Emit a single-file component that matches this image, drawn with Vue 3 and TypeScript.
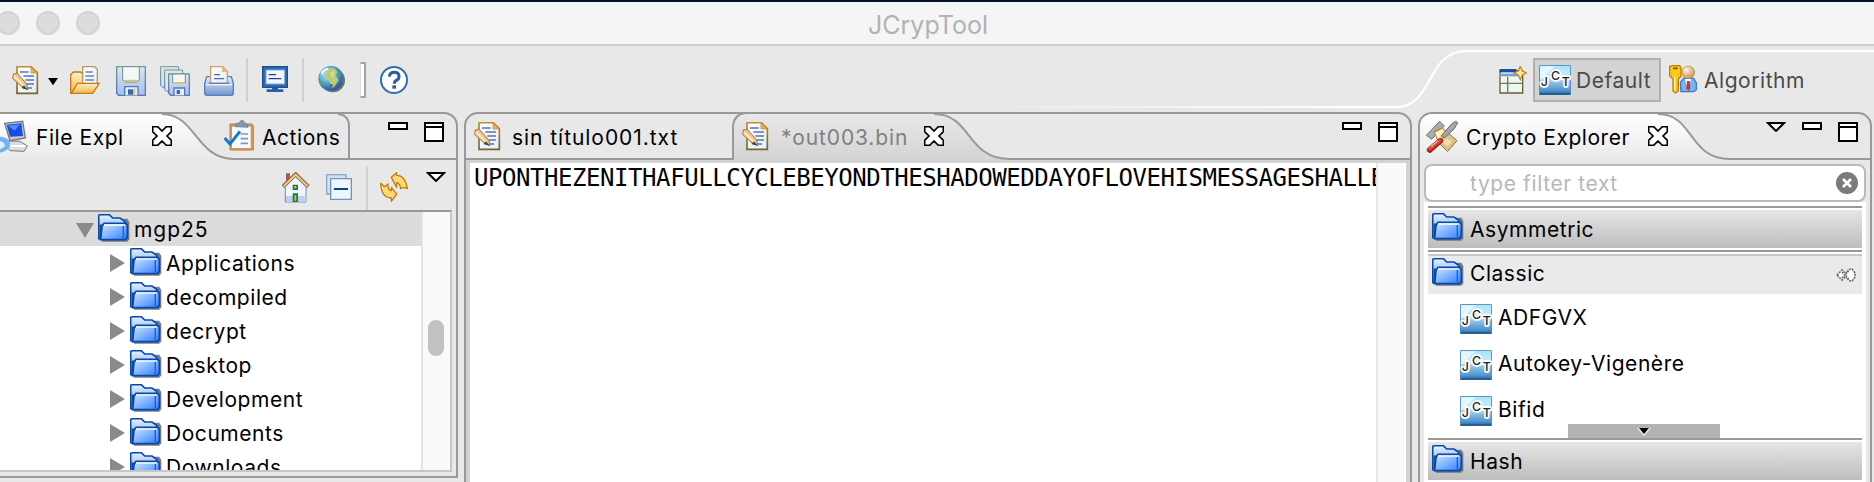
<script setup lang="ts">
import { h, ref } from 'vue'

interface ToolItem { icon: string; label: string; width: number; gap: number }

const tools: ToolItem[] = [
  { icon: 'doc', label: 'New', width: 30, gap: 12 },
  { icon: 'caret', label: 'New menu', width: 10, gap: 6 },
  { icon: 'open', label: 'Open', width: 30, gap: 12 },
  { icon: 'save', label: 'Save', width: 30, gap: 16 },
  { icon: 'saveall', label: 'Save all', width: 30, gap: 14 },
  { icon: 'print', label: 'Print', width: 30, gap: 14 },
  { icon: 'rule', label: '', width: 2, gap: 12 },
  { icon: 'monitor', label: 'Console', width: 30, gap: 14 },
  { icon: 'rule', label: '', width: 2, gap: 10 },
  { icon: 'globe', label: 'Web', width: 30, gap: 14 },
  { icon: 'grip', label: '', width: 6, gap: 12 },
  { icon: 'help', label: 'Help', width: 30, gap: 14 },
]

const letters = [
  { c: 'J', x: 5, y: 64 },
  { c: 'C', x: 36, y: 46 },
  { c: 'T', x: 68, y: 64 },
]

const JctIcon = () =>
  h('svg', { width: 32, height: 30, viewBox: '0 0 96 90' }, [
    h('use', { href: '#i-tile', width: 96, height: 90 }),
    h(
      'g',
      {
        'font-family': 'Inter, sans-serif', 'font-size': 37, 'font-weight': 500, fill: '#222',
        stroke: '#fff', 'stroke-width': 11, 'stroke-linejoin': 'round', 'paint-order': 'stroke',
      },
      letters.map((l) => h('text', { x: l.x, y: l.y }, l.c)),
    ),
  ])

const folders = ['Applications', 'decompiled', 'decrypt', 'Desktop', 'Development', 'Documents', 'Downloads']
const classic = ['ADFGVX', 'Autokey-Vigenère', 'Bifid']
const content = ref('UPONTHEZENITHAFULLCYCLEBEYONDTHESHADOWEDDAYOFLOVEHISMESSAGESHALLE')
const filter = ref('')
</script>

<template>
  <div class="window">
    <svg class="defs" width="0" height="0" aria-hidden="true">
      <defs>
        <linearGradient id="gBlue" x1="0" y1="0" x2="1" y2="1"><stop offset="0" stop-color="#d6eaff" /><stop offset="1" stop-color="#2a7cff" /></linearGradient>
        <linearGradient id="gBack" x1="0" y1="0" x2="0" y2="1"><stop offset="0" stop-color="#e8f2ff" /><stop offset="1" stop-color="#4a90f0" /></linearGradient>
        <linearGradient id="gDoc" x1="0" y1="0" x2="1" y2="1"><stop offset="0" stop-color="#fff" /><stop offset="1" stop-color="#e3edf9" /></linearGradient>
        <linearGradient id="gDocEdge" x1="0" y1="0" x2="0" y2="1"><stop offset="0" stop-color="#c08f2c" /><stop offset="1" stop-color="#75642c" /></linearGradient>
        <linearGradient id="gGold" x1="0" y1="0" x2="0" y2="1"><stop offset="0" stop-color="#fff0c4" /><stop offset="1" stop-color="#f2b64a" /></linearGradient>
        <linearGradient id="gDisk" x1="0" y1="0" x2="0" y2="1"><stop offset="0" stop-color="#d9e8ee" /><stop offset="1" stop-color="#a3bfec" /></linearGradient>
        <linearGradient id="gDiskEdge" x1="0" y1="0" x2="0" y2="1"><stop offset="0" stop-color="#789596" /><stop offset="1" stop-color="#5577b5" /></linearGradient>
        <linearGradient id="gTray" x1="0" y1="0" x2="0" y2="1"><stop offset="0" stop-color="#e5edf8" /><stop offset="1" stop-color="#6f96cf" /></linearGradient>
        <radialGradient id="gGlobe" cx=".35" cy=".3" r=".75"><stop offset="0" stop-color="#c9f2f5" /><stop offset=".5" stop-color="#50a9d6" /><stop offset="1" stop-color="#274b8b" /></radialGradient>
        <linearGradient id="gJct" x1="0" y1="0" x2="0" y2="1"><stop offset="0" stop-color="#a8e4f8" /><stop offset=".42" stop-color="#c9edfb" /><stop offset=".6" stop-color="#8abce4" /><stop offset=".86" stop-color="#4f94d0" /><stop offset="1" stop-color="#29609b" /></linearGradient>
        <radialGradient id="gHead" cx=".35" cy=".3" r=".8"><stop offset="0" stop-color="#fff3d8" /><stop offset="1" stop-color="#c08a4c" /></radialGradient>
        <linearGradient id="gWhiteTab" x1="0" y1="0" x2="0" y2="1"><stop offset="0" stop-color="#fff" /><stop offset="1" stop-color="#e8e8e8" /></linearGradient>
        <linearGradient id="gGreyTab" x1="0" y1="0" x2="0" y2="1"><stop offset="0" stop-color="#e8e8e8" /><stop offset="1" stop-color="#d3d3d3" /></linearGradient>
      </defs>
      <symbol id="i-doc" viewBox="0 0 90 90">
        <path d="M15 2H58L76 20V82H15Z" fill="url(#gDoc)" stroke="url(#gDocEdge)" stroke-width="5" />
        <path d="M57 3V21H75Z" fill="#e5b45c" stroke="#c18d35" stroke-width="2" />
        <path d="M24 18H50M34 30H66M40 42H66M44 54H66M42 66H60" stroke="#5674b7" stroke-width="4" />
        <path d="M4 24L16 22L44 54L48 70L34 66L2 38Z" fill="#e7c797" stroke="#aa7635" stroke-width="3" />
        <path d="M6 30L38 62" stroke="#fff0cc" stroke-width="5" /><path d="M36 58L48 72L28 66Z" fill="#354d62" />
      </symbol>
      <symbol id="i-caret" viewBox="0 0 30 90"><path d="M0 36H30L15 58Z" fill="#000" /></symbol>
      <symbol id="i-open" viewBox="0 0 90 90">
        <path d="M2 82V26L10 18H32L38 24H60V60L18 82Z" fill="url(#gGold)" stroke="#bd7c1c" stroke-width="4" />
        <path d="M38 2H74L82 10V54H38Z" fill="url(#gDoc)" stroke="#b59a55" stroke-width="4" />
        <path d="M46 18H68M46 30H72M46 42H72" stroke="#6685bd" stroke-width="5" />
        <path d="M22 52H88L68 82H4Z" fill="url(#gGold)" stroke="#c07d1d" stroke-width="4" />
      </symbol>
      <symbol id="i-save" viewBox="0 0 90 90">
        <path d="M2 2H88V88H8L2 82Z" fill="url(#gDisk)" stroke="url(#gDiskEdge)" stroke-width="4" />
        <path d="M20 2H70V42L64 48H26L20 42Z" fill="#f3f7f6" stroke="#70908e" stroke-width="3" /><path d="M24 44H66" stroke="#d9c069" stroke-width="5" />
        <path d="M26 88V62H66V88" fill="#e7eefa" stroke="#5577b5" stroke-width="4" /><path d="M36 70H52V86H36Z" fill="#3968a9" /><path d="M56 64V86" stroke="#e0c88d" stroke-width="4" />
      </symbol>
      <symbol id="i-saveall" viewBox="0 0 90 90">
        <path d="M2 2H56V64H8L2 58Z" fill="#d9e4e7" stroke="url(#gDiskEdge)" stroke-width="3" />
        <path d="M14 12H68V76H20L14 70Z" fill="#dce8ec" stroke="url(#gDiskEdge)" stroke-width="3" />
        <path d="M26 24H88V88H32L26 82Z" fill="url(#gDisk)" stroke="url(#gDiskEdge)" stroke-width="4" />
        <path d="M38 24H76V50H38Z" fill="#f5f7f2" stroke="#70908e" stroke-width="3" /><path d="M40 50H74" stroke="#d9c069" stroke-width="4" />
        <path d="M42 88V66H74V88" fill="#e7eefa" stroke="#5577b5" stroke-width="4" /><path d="M50 72H60V84H50Z" fill="#3968a9" />
      </symbol>
      <symbol id="i-print" viewBox="0 0 90 90">
        <path d="M8 32H82L88 52V84L84 88H6L2 84V52Z" fill="url(#gTray)" stroke="#5b7cb9" stroke-width="4" />
        <path d="M20 2H56L70 16V52H20Z" fill="url(#gDoc)" stroke="#c3a568" stroke-width="4" /><path d="M54 3V18H69Z" fill="#e6bb67" />
        <path d="M30 26H48M30 38H60" stroke="#576b9b" stroke-width="4" /><path d="M6 56H84" stroke="#eef5ff" stroke-width="4" /><path d="M14 52H76" stroke="#637fac" stroke-width="4" />
      </symbol>
      <symbol id="i-monitor" viewBox="0 0 90 90">
        <path d="M2 2H76V64H2Z" fill="#2d6bb4" stroke="#1c4e94" stroke-width="4" /><path d="M12 12H68V54H12Z" fill="#f1f6ff" stroke="#80a9da" stroke-width="3" />
        <path d="M20 26H42M20 38H58" stroke="#283d8d" stroke-width="4" /><path d="M30 64H48V70H64V78H14V70H30Z" fill="#2361a7" />
      </symbol>
      <symbol id="i-globe" viewBox="0 0 90 90">
        <circle cx="45" cy="43" r="36" fill="#77705a" /><circle cx="39" cy="38" r="37" fill="url(#gGlobe)" stroke="#4188ae" stroke-width="2" />
        <path d="M30 8L48 6L58 18L52 28L62 42L52 58L44 66L32 44L22 38L20 22Z" fill="#b9cd78" /><path d="M36 20L48 14L50 28L42 36Z" fill="#e7d29b" />
        <path d="M58 14L70 26L64 34ZM8 44L18 54L16 62L6 52Z" fill="#659b62" /><circle cx="40" cy="58" r="4" fill="#c3342b" /><path d="M10 24Q16 10 30 8" stroke="#e6fcff" stroke-width="6" fill="none" />
      </symbol>
      <symbol id="i-help" viewBox="0 0 90 90">
        <circle cx="42" cy="42" r="39" fill="#fff" stroke="#346fa9" stroke-width="6" /><path d="M28 32Q29 19 43 19T57 32Q57 39 49 43Q43 46 43 53" fill="none" stroke="#285f9e" stroke-width="9" /><path d="M37 58H48V68H37Z" fill="#285f9e" />
      </symbol>
      <symbol id="i-folder" viewBox="0 0 96 84">
        <path d="M8 14H88L94 24V76L88 83H12Z" fill="#666" opacity=".85" />
        <path d="M2 74V4L8 2H34L44 12H66L80 22V34H8V76Z" fill="url(#gBack)" stroke="#0748a8" stroke-width="5" />
        <path d="M12 38L18 28H84L88 34V70L82 77H8Z" fill="url(#gBlue)" stroke="#0748a8" stroke-width="5" /><path d="M18 33H80" stroke="#fff" stroke-width="4" /><path d="M76 36V72" stroke="#2b55d8" stroke-width="4" />
      </symbol>
      <symbol id="i-tile" viewBox="0 0 96 90">
        <rect x="1" y="1" width="94" height="88" rx="3" fill="url(#gJct)" stroke="#4d86b8" stroke-width="3" /><path d="M4 4H48L4 44Z" fill="#fff" opacity=".65" /><path d="M2 87H94" stroke="#235889" stroke-width="5" />
      </symbol>
      <symbol id="i-close" viewBox="0 0 60 60"><path d="M2 2H17L30 15L43 2H58V17L45 30L58 43V58H43L30 45L17 58H2V43L15 30L2 17Z" fill="#fff" stroke="#000" stroke-width="5" /></symbol>
      <symbol id="i-min" viewBox="0 0 20 8"><path d="M1 1H19V7H1Z" fill="#fff" stroke="#000" stroke-width="2" /></symbol>
      <symbol id="i-max" viewBox="0 0 20 20"><path d="M1 1H19V19H1ZM1 5H19" fill="#fff" stroke="#000" stroke-width="2" /></symbol>
      <symbol id="i-menu" viewBox="0 0 20 10"><path d="M2 1H18L10 9Z" fill="#fff" stroke="#000" stroke-width="2" /></symbol>
    </svg>

    <div class="desktop"></div>
    <header class="titlebar">
      <div class="lights"><i></i><i></i><i></i></div>
      <span class="title">JCrypTool</span>
    </header>

    <nav class="toolbar">
      <svg class="swoosh" width="914" height="66" aria-hidden="true">
        <linearGradient id="gFade" gradientUnits="userSpaceOnUse" x1="0" y1="0" x2="400" y2="0"><stop offset="0" stop-color="#fff" stop-opacity="0" /><stop offset="1" stop-color="#fff" /></linearGradient>
        <path d="M0 60H400V62H0Z" fill="url(#gFade)" /><path d="M400 61H478" stroke="none" fill="none" /><path d="M400 61H436C474 61 466 5 506 5H914" fill="none" stroke="#fff" stroke-width="2" />
      </svg>
      <template v-for="(t, n) in tools" :key="n">
        <span v-if="t.icon === 'rule' || t.icon === 'grip'" :class="t.icon" :style="{ marginLeft: t.gap + 'px' }"></span>
        <svg v-else height="30" :width="t.width" :style="{ marginLeft: t.gap + 'px' }" :aria-label="t.label"><use :href="'#i-' + t.icon" /></svg>
      </template>
      <div class="perspectives">
        <svg width="28" height="30" viewBox="0 0 84 90">
          <path d="M3 14H71V81H3Z" fill="#edf8ed" stroke="#6b5e3c" stroke-width="4" /><path d="M2 14H52" stroke="#164f9b" stroke-width="10" /><path d="M3 27H71" stroke="#75a0cf" stroke-width="8" /><path d="M26 32V81M3 52H71M26 52H71" stroke="#7a755d" stroke-width="4" /><path d="M64 1L70 15L83 21L70 27L64 41L58 27L45 21L58 15Z" fill="#ffe9a8" stroke="#bd8a19" stroke-width="4" />
        </svg>
        <button class="persp active"><JctIcon /><span>Default</span></button>
        <button class="persp">
          <svg width="28" height="30" viewBox="0 0 84 90">
            <path d="M34 52L44 40H74L82 54V74L74 80H36Z" fill="#75b4f2" stroke="#3479d0" stroke-width="4" /><path d="M48 42L57 78L66 42Z" fill="#fff" /><path d="M54 48H62L64 70L58 78L52 70Z" fill="#d32c2c" />
            <circle cx="58" cy="22" r="19" fill="url(#gHead)" stroke="#b9874b" stroke-width="2" /><path d="M2 4L10 2H32L36 8V34L28 42V78L20 84L12 78V42L2 32Z" fill="#ffc71e" stroke="#b97e08" stroke-width="4" /><path d="M12 10H26" stroke="#7d5810" stroke-width="5" /><path d="M17 36V76" stroke="#fff3a0" stroke-width="4" />
          </svg><span>Algorithm</span>
        </button>
      </div>
    </nav>

    <main class="workbench">
      <section class="panel files">
        <svg class="tabs" width="458" height="50" aria-hidden="true">
          <path d="M0 2H162C196 2 196 47 234 47V50H0Z" fill="url(#gWhiteTab)" /><path d="M162 2C196 2 196 47 234 47H457M338 2Q349 3 349 14V47" fill="none" stroke="#999" stroke-width="2" />
        </svg>
        <div class="head">
          <svg width="28" height="34" viewBox="0 0 84 102"><path d="M14 10L68 4L76 54L30 62Z" fill="#c9c9cc" stroke="#77777c" stroke-width="4" /><path d="M20 14L64 10L69 48L30 50Z" fill="#164fe0" /><path d="M24 17L60 13L44 32Z" fill="#4b8eff" /><path d="M0 62L60 64L82 78L72 94L30 92Z" fill="#ddd" stroke="#777" stroke-width="3" /><path d="M32 78L76 78" stroke="#fff" stroke-width="6" /><path d="M0 50Q24 50 30 70Q32 92 0 98Z" fill="#6fb4ee" /><path d="M0 64Q16 66 14 80L0 88Z" fill="#dff1ff" /></svg>
          <span class="lbl file">File Expl</span>
          <svg class="close" width="20" height="20"><use href="#i-close" /></svg>
          <svg class="clip" width="30" height="32" viewBox="0 0 90 96">
            <path d="M18 12H84L88 18V90H18Z" fill="#d19b58" stroke="#bb823f" stroke-width="3" /><path d="M24 20H80V84H24Z" fill="#f6faff" /><path d="M34 20V12L46 8Q54 -6 62 8L72 14V22Z" fill="#8796ad" stroke="#65758c" stroke-width="2" /><path d="M50 42H72M50 56H72M50 70H72" stroke="#7d95bf" stroke-width="5" /><path d="M2 54L18 72L48 34" fill="none" stroke="#1277d9" stroke-width="9" />
          </svg>
          <span class="lbl">Actions</span>
          <div class="ctl"><svg width="20" height="8"><use href="#i-min" /></svg><svg width="20" height="20"><use href="#i-max" /></svg></div>
        </div>
        <div class="viewbar">
          <svg width="28" height="32" viewBox="0 0 84 96"><path d="M12 4H24V30H12Z" fill="#a06048" /><path d="M10 44L40 14L72 44V90H10Z" fill="#edf5ff" stroke="#728bb2" stroke-width="3" /><path d="M12 72H72V90H12Z" fill="#bad0ee" /><path d="M3 44L41 7L79 44" fill="none" stroke="#8f673b" stroke-width="12" /><path d="M5 43L41 8L77 43" fill="none" stroke="#e9c894" stroke-width="6" /><path d="M32 38H48V54H32ZM32 64H48V90H32Z" fill="#2d7046" /><path d="M36 42H43V49H36ZM37 70H43V86H37Z" fill="#9bd348" /></svg>
          <svg width="26" height="26" viewBox="0 0 78 78"><path d="M2 2H60V60H2Z" fill="#cfe2f4" stroke="#8ba7c9" stroke-width="4" /><path d="M14 14H76V76H14Z" fill="#eaf7ff" stroke="#7b91b7" stroke-width="4" /><path d="M24 45H66" stroke="#11407f" stroke-width="6" /></svg>
          <span class="rule"></span>
          <svg width="28" height="30" viewBox="0 0 84 90"><g fill="#ffd979" stroke="#bd7e0d" stroke-width="4" stroke-linejoin="round"><path d="M34 16L50 2V10Q76 10 82 50Q72 44 62 50Q60 34 50 32V46Z" /><path d="M2 34L14 44L24 36Q22 54 34 56V46L50 66L34 88V78Q4 78 2 34Z" /></g></svg>
          <svg class="vmenu" width="20" height="10"><use href="#i-menu" /></svg>
        </div>
        <div class="treebox">
          <ul class="tree">
            <li class="root"><svg class="tri" width="18" height="16"><path d="M0 1H18L9 16Z" fill="#8a8a8a" /></svg><svg class="fold" width="32" height="28"><use href="#i-folder" /></svg><span>mgp25</span></li>
            <li v-for="f in folders" :key="f"><svg class="tri" width="15" height="18"><path d="M0 0L15 9L0 18Z" fill="#8a8a8a" /></svg><svg class="fold" width="32" height="28"><use href="#i-folder" /></svg><span>{{ f }}</span></li>
          </ul>
          <div class="track"><div class="thumb"></div></div>
        </div>
      </section>

      <section class="panel editor">
        <svg class="tabs" width="948" height="50" aria-hidden="true">
          <path d="M270 50V14Q271 2 284 2H470C508 2 502 47 546 47V50Z" fill="url(#gGreyTab)" /><path d="M1 47H269V14Q270 2 282 1M470 2C508 2 502 47 546 47H947" fill="none" stroke="#999" stroke-width="2" />
        </svg>
        <div class="head">
          <svg class="d1" width="30" height="30"><use href="#i-doc" /></svg><span class="lbl t1">sin título001.txt</span>
          <svg class="d2" width="30" height="30"><use href="#i-doc" /></svg><span class="lbl t2">*out003.bin</span>
          <svg class="close" width="20" height="20"><use href="#i-close" /></svg>
          <div class="ctl"><svg width="20" height="8"><use href="#i-min" /></svg><svg width="20" height="20"><use href="#i-max" /></svg></div>
        </div>
        <div class="textbox"><pre>{{ content }}</pre><div class="etrack"></div></div>
      </section>

      <section class="panel crypto">
        <svg class="tabs" width="454" height="50" aria-hidden="true">
          <path d="M2 50V14Q2 2 14 2H240C276 2 270 47 312 47V50Z" fill="url(#gWhiteTab)" /><path d="M240 2C276 2 270 47 312 47H453" fill="none" stroke="#999" stroke-width="2" />
        </svg>
        <div class="head">
          <svg width="34" height="34" viewBox="0 0 102 102"><path d="M4 46L44 4L58 18L20 58Z" fill="#aaa" stroke="#777" stroke-width="3" /><path d="M28 36L52 24L96 62L68 94L42 70Z" fill="#dfc08a" stroke="#927047" stroke-width="3" /><path d="M30 38L52 26L66 44L40 60Z" fill="#fff3a8" /><path d="M60 54L80 62L68 80L54 66Z" fill="#f7dda6" /><path d="M94 4L82 10L48 48L58 54L88 26L98 8Z" fill="#a6a6ae" stroke="#66666e" stroke-width="3" /><path d="M46 62L14 90" stroke="#9c241e" stroke-width="17" stroke-linecap="round" /><path d="M45 61L14 86" stroke="#e04a3e" stroke-width="11" stroke-linecap="round" /><path d="M38 62L18 80" stroke="#ffaaa0" stroke-width="4" /></svg>
          <span class="lbl">Crypto Explorer</span>
          <svg class="close" width="20" height="20"><use href="#i-close" /></svg>
          <div class="ctl"><svg width="20" height="10"><use href="#i-menu" /></svg><svg width="20" height="8"><use href="#i-min" /></svg><svg width="20" height="20"><use href="#i-max" /></svg></div>
        </div>
        <label class="search"><input v-model="filter" placeholder="type filter text" /><svg width="22" height="22"><circle cx="11" cy="11" r="11" fill="#7b7b7b" /><path d="M7 7L15 15M15 7L7 15" stroke="#fff" stroke-width="2.6" /></svg></label>
        <div class="palette">
          <div class="drawer"><svg width="32" height="28"><use href="#i-folder" /></svg><span>Asymmetric</span></div>
          <div class="drawer open"><svg width="32" height="28"><use href="#i-folder" /></svg><span>Classic</span>
            <svg class="pin" width="20" height="14"><path d="M1 7L6 2L10 6L14 1H16L19 5V9L16 13H14L10 8L6 12Z" fill="#fff" stroke="#666" stroke-width="1.6" stroke-dasharray="2 1" /><path d="M6 4L12 12M6 10L12 2" stroke="#777" stroke-width="1.4" stroke-dasharray="2 1" /></svg></div>
          <div class="entries">
            <div v-for="c in classic" :key="c" class="entry"><JctIcon /><span>{{ c }}</span></div>
            <div class="more"><svg width="14" height="8"><path d="M0 0H14L7 8Z" fill="#eee" /><path d="M2 0H12L7 6Z" fill="#000" /></svg></div>
          </div>
          <div class="drawer last"><svg width="32" height="28"><use href="#i-folder" /></svg><span>Hash</span></div>
        </div>
      </section>
    </main>
  </div>
</template>

<style>
body { overflow: hidden; background: #e8e8e8; }
</style>

<style scoped>
* { box-sizing: border-box; }
svg { display: block; flex: none; }
.window { width: 1874px; height: 482px; overflow: hidden; background: #e8e8e8; color: #000; font: 21px/26px Inter, "Liberation Sans", sans-serif; letter-spacing: .55px; display: flex; flex-direction: column; }
.window span { white-space: pre; }
.defs { position: absolute; }
.desktop { height: 2px; background: #07142e; flex: none; }
.titlebar { height: 44px; flex: none; background: #f5f5f5; border-bottom: 2px solid #cfcfcf; display: flex; align-items: center; }
.lights { display: flex; gap: 16px; margin-left: -4px; width: 872px; }
.lights i { width: 24px; height: 24px; border-radius: 50%; background: #dcdcdc; border: 2px solid #d4d4d4; }
.title { color: #b2b2b2; font-size: 25px; letter-spacing: 0; padding-top: 3px; }
.toolbar { height: 66px; flex: none; display: flex; align-items: flex-start; padding-top: 20px; position: relative; }
.swoosh { position: absolute; right: 0; top: 0; }
.rule { width: 2px; height: 44px; background: #cfcfcf; margin-top: -8px; flex: none; }
.grip { width: 6px; height: 36px; margin-top: -4px; background: #fff; border: 2px solid #a5a5a5; border-left-color: #ddd; border-left-width: 1px; }
.perspectives { position: relative; display: flex; margin-left: auto; margin-right: 65px; align-items: flex-start; }
.persp { height: 44px; margin: -8px 0 0 6px; padding: 0 2px 0 0; display: flex; align-items: center; border: 2px solid transparent; background: none; font: inherit; letter-spacing: inherit; color: #4a4a4a; }
.persp.active { width: 128px; padding-left: 4px; background: #d3d3d3; border-color: #b0b0b0; }
.persp span { margin-left: 5px; padding-top: 2px; }
.persp.active + .persp span { margin-left: 7px; }
.workbench { flex: none; height: 370px; display: flex; }
.panel { position: relative; border: 2px solid #999; border-radius: 14px 14px 0 0; flex: none; display: flex; flex-direction: column; overflow: hidden; }
.tabs { position: absolute; top: -2px; left: -2px; }
.head { position: relative; height: 50px; flex: none; display: flex; align-items: flex-start; }
.lbl { margin-top: 11px; }
.close { margin-top: 12px; }
.ctl { margin-left: auto; display: flex; gap: 16px; padding-top: 8px; }
.files { width: 458px; height: 366px; border-left: 0; border-top-left-radius: 0; }
.files .tabs { left: 0; }
.files .head > svg:first-child { margin-top: 6px; }
.file { margin-left: 8px; width: 116px; }
.clip { margin: 6px 8px 0 52px; }
.files .ctl { padding-right: 12px; }
.viewbar { height: 46px; flex: none; display: flex; align-items: flex-start; padding: 8px 11px 0 282px; position: relative; }
.viewbar svg:nth-child(2) { margin: 2px 0 0 16px; }
.viewbar .rule { margin: -5px 0 0 14px; height: 43px; }
.viewbar svg:nth-child(4) { margin-left: 12px; }
.viewbar .vmenu { margin: 0 -1px 0 auto; }
.treebox { width: 452px; height: 262px; border: 2px solid #c6c6c6; border-left: 0; border-top-color: #999; background: #fff; display: flex; overflow: hidden; flex: none; }
.tree { list-style: none; margin: 0; padding: 0; flex: 1; }
.tree li { height: 34px; display: flex; align-items: flex-start; padding-left: 110px; padding-top: 2px; }
.tree .root { padding-left: 76px; background: #dcdcdc; border-top: 2px solid #ddd; padding-top: 0; letter-spacing: .95px; }
.tree li:not(.root) .tri { margin-top: 6px; }
.tree .root .tri { margin-top: 8px; }
.fold { margin-left: 5px; }
.tree .root .fold { margin-left: 4px; }
.tree span { margin: 3px 0 0 4px; }
.track { width: 29px; border-left: 2px solid #e4e4e4; background: #fafafa; padding: 108px 6px 0 5px; }
.thumb { height: 36px; border-radius: 8px; background: #c1c1c1; }
.editor { margin-left: 6px; width: 948px; height: 390px; background: linear-gradient(#e8e8e8 0 46px, #d3d3d3 46px); }
.textbox { margin: -1px 4px 0; height: 330px; background: #fff; display: flex; flex: none; }
pre { margin: 0; width: 906px; padding: 1px 0 0 4px; overflow: hidden; font: 24px/28px "DejaVu Sans Mono", monospace; letter-spacing: -0.44px; }
.etrack { width: 28px; border-left: 2px solid #e8e8e8; background: #fafafa; }
.d1 { margin: 8px 0 0 8px; }
.t1 { margin-left: 8px; width: 222px; letter-spacing: .95px; }
.d2 { margin: 8px 0 0 8px; }
.t2 { margin-left: 9px; width: 143px; color: #808080; letter-spacing: .85px; }
.editor .ctl { padding-right: 12px; }
.crypto { margin-left: 6px; width: 454px; height: 390px; }
.crypto .head > svg:first-child { margin: 6px 0 0 5px; }
.crypto .lbl { margin-left: 7px; width: 182px; }
.crypto .ctl { padding-right: 12px; }
.search { position: relative; height: 38px; margin: 0 4px; border: 2px solid #b9b9b9; border-radius: 8px; background: #fff; display: flex; align-items: center; flex: none; padding-right: 6px; }
.search input { border: 0; outline: 0; background: transparent; flex: 1; min-width: 0; padding: 2px 0 0 44px; font: inherit; letter-spacing: .6px; }
.search input::placeholder { color: #b8b8b8; opacity: 1; }
.palette { margin: 0 4px; padding: 4px 4px 0; background: #fff; height: 290px; flex: none; }
.drawer { height: 42px; border-top: 2px solid #999; box-shadow: inset 0 2px #fff; background: linear-gradient(#e8e8e8, #bdbdbd); display: flex; align-items: flex-start; padding: 5px 4px 0; }
.drawer span { margin: 4px 0 0 6px; }
.drawer.open { margin-top: 2px; height: 44px; padding-top: 6px; background: linear-gradient(#fff 0 2px, #c8c8c8 2px 4px, #eaeaea 4px); box-shadow: none; }
.drawer.open span { margin-top: 3px; }
.pin { margin: 10px 2px 0 auto; }
.entries { height: 144px; position: relative; padding: 10px 0 0 32px; }
.entry { display: flex; height: 46px; align-items: flex-start; }
.entry span { margin: 1px 0 0 6px; }
.more { position: absolute; left: 140px; top: 130px; width: 152px; height: 14px; background: #b3b3b3; display: flex; justify-content: center; padding-top: 4px; }
</style>
